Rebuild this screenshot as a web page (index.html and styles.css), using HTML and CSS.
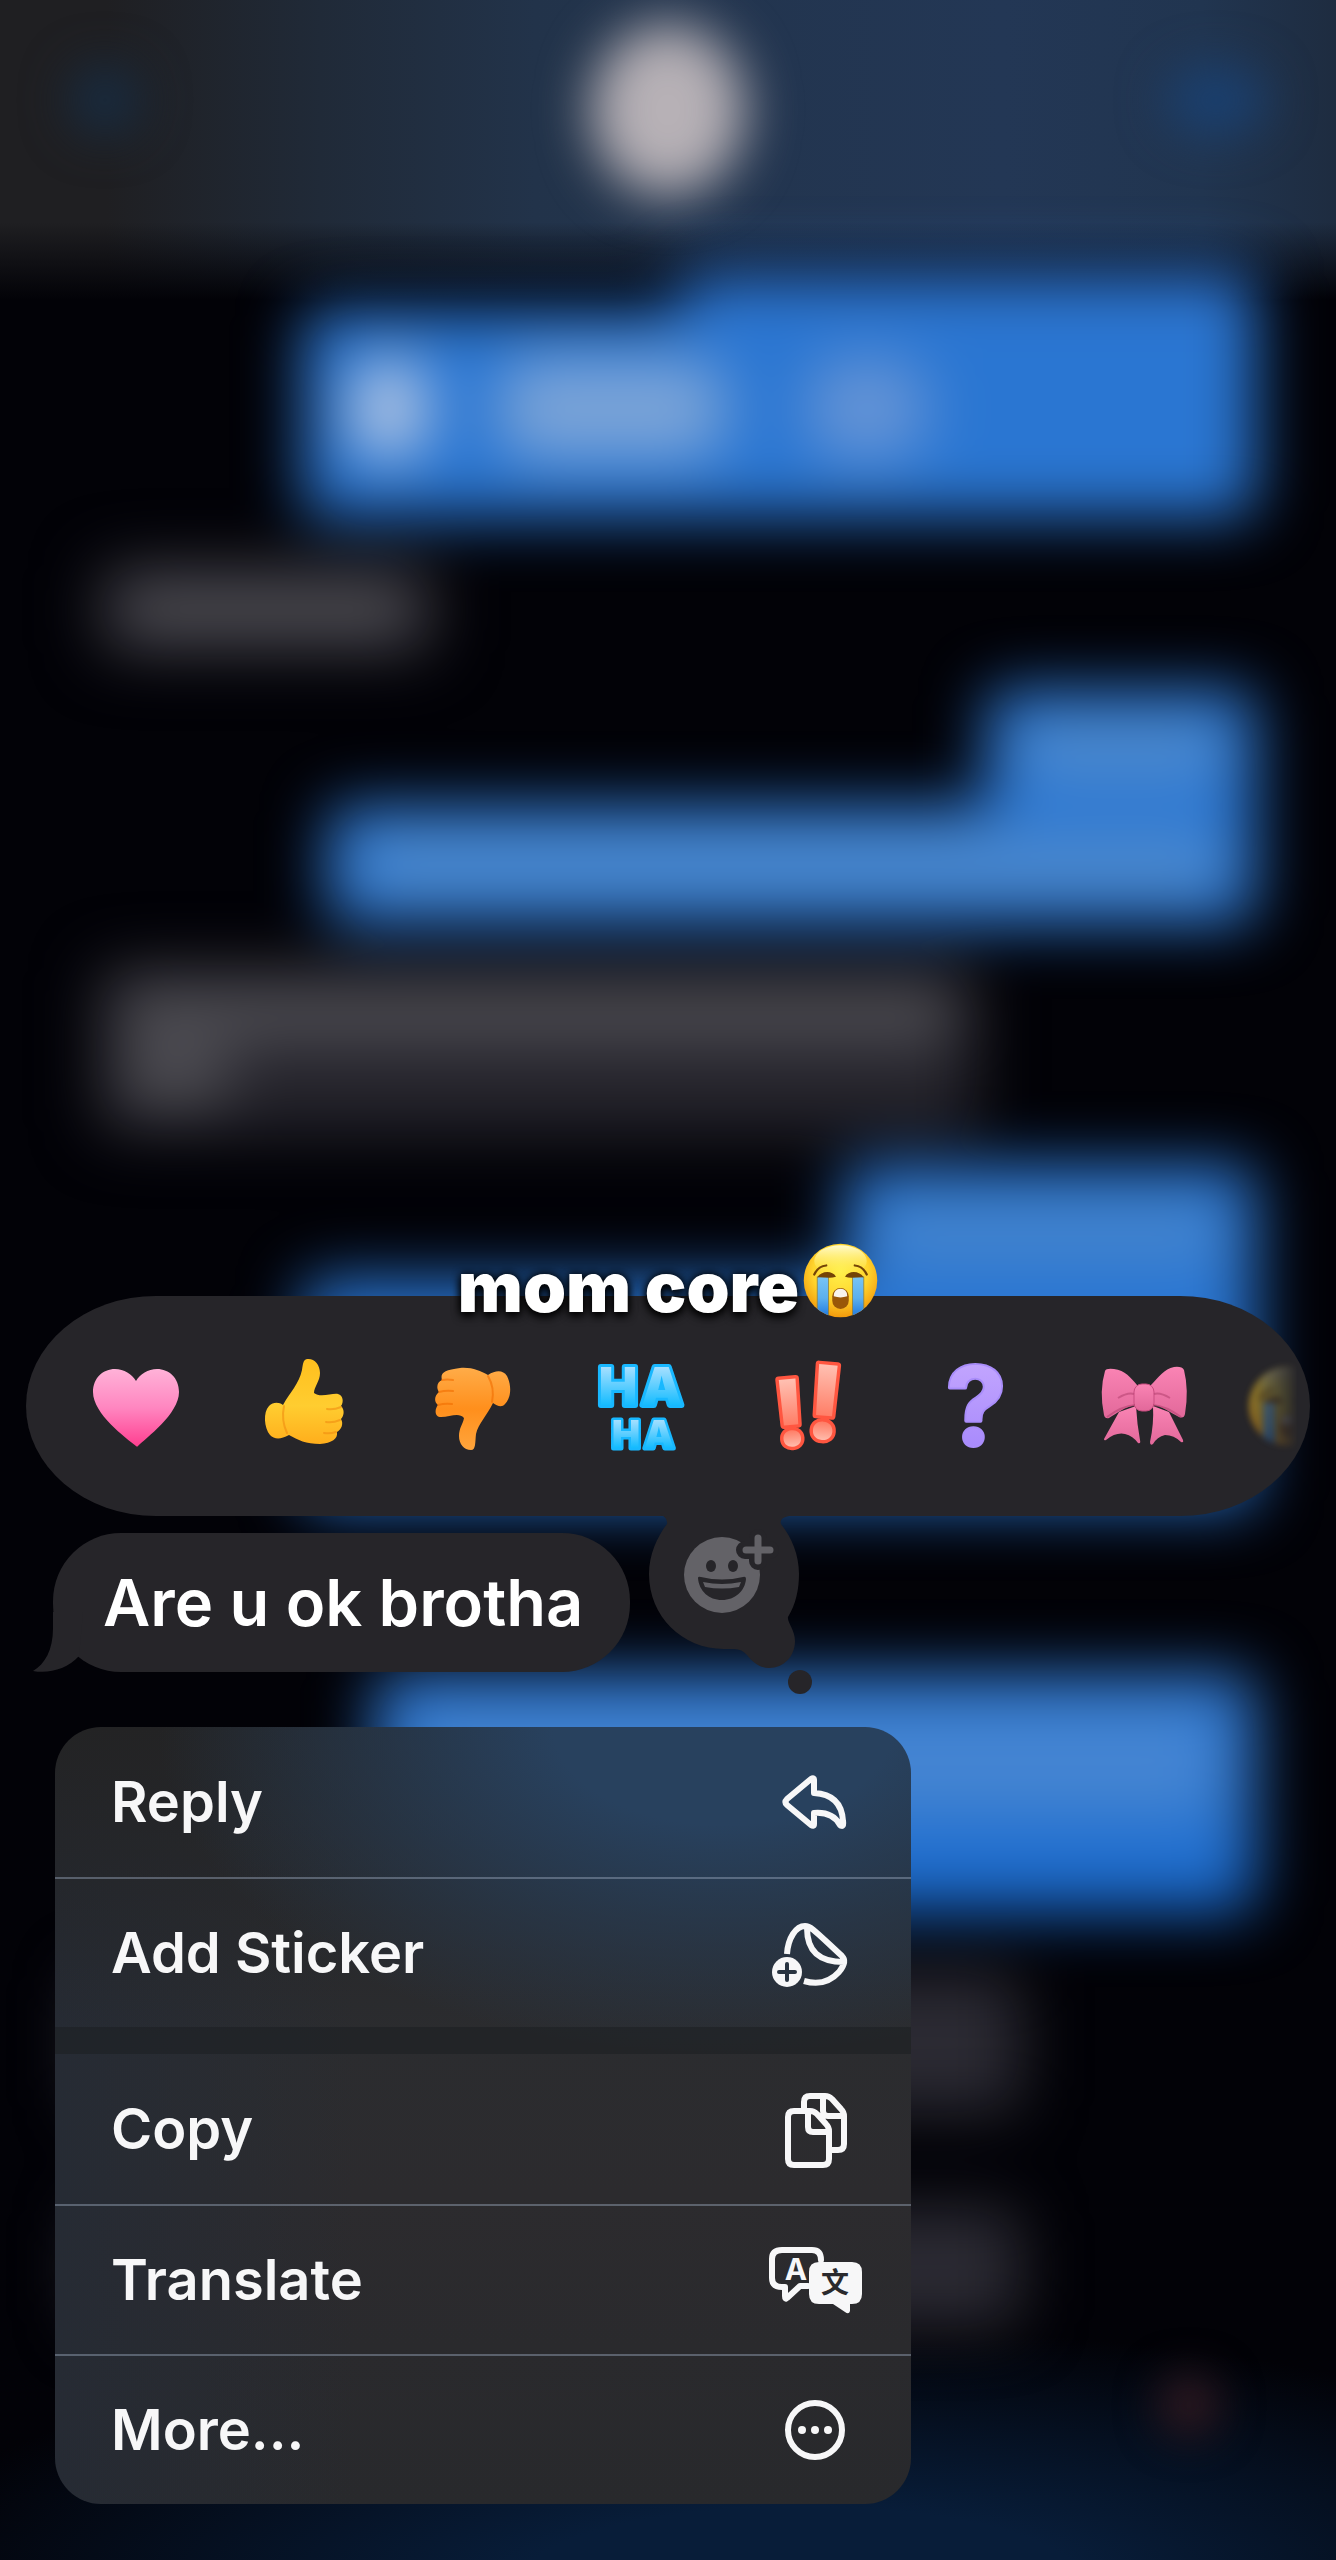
FILE: index.html
```html
<!DOCTYPE html>
<html lang="en">
<head>
<meta charset="utf-8">
<meta name="viewport" content="width=device-width, initial-scale=1">
<title>Messages</title>
<link rel="stylesheet" href="styles.css">
</head>
<body>
<svg class="defs" aria-hidden="true">
  <defs>
    <radialGradient id="face" cx="50%" cy="38%" r="62%"><stop offset="0" stop-color="#fff04a"/><stop offset=".6" stop-color="#ffd52e"/><stop offset="1" stop-color="#f29a0c"/></radialGradient>
    <linearGradient id="shine" x2="0" y2="1"><stop offset="0" stop-color="#fffbd0"/><stop offset="1" stop-color="#fff04a" stop-opacity="0"/></linearGradient>
    <linearGradient id="tear" x2="0" y2="1"><stop offset="0" stop-color="#78c4f4"/><stop offset=".5" stop-color="#5cb0ee"/><stop offset="1" stop-color="#1670dc"/></linearGradient>
    <clipPath id="faceclip"><circle cx="50" cy="50" r="49"/></clipPath>
    <symbol id="sob" viewBox="0 0 100 100">
      <circle cx="50" cy="50" r="49" fill="url(#face)"/>
      <ellipse cx="50" cy="24" rx="35" ry="21" fill="url(#shine)"/>
      <g clip-path="url(#faceclip)" fill="url(#tear)" stroke="#8a7d3c" stroke-width="1"><path d="M19 45H34V102H19ZM66 45H81V102H66Z"/></g>
      <path d="M19 46C24 37 39 36 44 45C36 48 28 45 19 46ZM56 45C61 36 76 37 81 46C72 45 64 48 56 45Z" fill="#744407"/>
      <path d="M15 42Q20 31 31 30M85 42Q80 31 69 30" fill="none" stroke="#744407" stroke-width="3" stroke-linecap="round"/>
      <rect x="39" y="60" width="22" height="28" rx="11" fill="#995708"/>
      <path d="M41 71Q41 61 50 61Q59 61 59 71Q50 74 41 71Z" fill="#f8f4ec"/>
    </symbol>
    <linearGradient id="pink" x2="0" y2="1"><stop offset="0" stop-color="#ffb2d8"/><stop offset=".5" stop-color="#ff86c0"/><stop offset="1" stop-color="#ff3f90"/></linearGradient>
    <linearGradient id="gold" x2="0" y2="1"><stop offset="0" stop-color="#ffbf1e"/><stop offset=".55" stop-color="#ffcd30"/><stop offset="1" stop-color="#ffae1c"/></linearGradient>
    <linearGradient id="amber" x2="0" y2="1"><stop offset="0" stop-color="#ffac48"/><stop offset=".5" stop-color="#ff8f1c"/><stop offset="1" stop-color="#ffa53c"/></linearGradient>
    <linearGradient id="sky" x2="0" y2="1"><stop offset=".2" stop-color="#a4dfff"/><stop offset=".8" stop-color="#14bcff"/></linearGradient>
    <linearGradient id="coral" x2="0" y2="1"><stop offset=".1" stop-color="#ffd0c4"/><stop offset=".65" stop-color="#ff7860"/><stop offset=".8" stop-color="#ffb8a8"/></linearGradient>
    <linearGradient id="violet" x2="0" y2="1"><stop offset="0" stop-color="#c9acff"/><stop offset="1" stop-color="#a183fb"/></linearGradient>
    <linearGradient id="ribbon" x2="0" y2="1"><stop offset="0" stop-color="#fa84b4"/><stop offset="1" stop-color="#e2689a"/></linearGradient>
  </defs>
</svg>

<main class="screen">
  <div class="backdrop" aria-hidden="true">
    <div class="topbar">
      <span class="glow"></span>
      <span class="avatar"></span>
      <span class="glow glow-call"></span>
    </div>
    <div class="thread">
      <div class="msg sent stub"></div>
      <div class="msg sent block"><i class="smudge s1"></i><i class="smudge s2"></i><i class="smudge s3"></i></div>
      <div class="msg got short"><i class="line"></i></div>
      <div class="msg sent tiny"><i class="line"></i></div>
      <div class="msg sent wide"><i class="line"></i></div>
      <div class="msg got para"><i class="line"></i><i class="line half"></i></div>
      <div class="msg sent mid"><i class="line"></i></div>
      <div class="msg sent tall"></div>
      <div class="msg sent deep"><i class="line"></i></div>
      <div class="msg got tail-a"></div>
      <div class="msg got tail-b"></div>
    </div>
    <div class="composer"><span class="record"></span></div>
  </div>

  <div class="overlay">
    <section class="tapbacks" aria-label="Reactions">
      <p class="caption">mom core<svg class="caption-face" role="img" aria-label="Loudly crying face"><use href="#sob"/></svg></p>
      <div class="reactions">
        <button class="reaction" aria-label="Heart"><svg viewBox="0 0 100 100"><path fill="url(#pink)" d="M50 90C40 82 7 58 7 36C7 22 17 13 29 13C38 13 46 18 50 25C54 18 62 13 71 13C83 13 93 22 93 36C93 58 60 82 52 90Q51 91 50 90Z"/></svg></button>
        <button class="reaction" aria-label="Thumbs up"><svg viewBox="0 0 100 100"><path fill="url(#gold)" d="M53 3C60 2 66 8 66 17C66 25 60 31 60 37C66 42 78 37 84 38C89 39 90 46 87 50C91 54 90 60 87 63C90 68 87 74 83 76C84 83 78 87 66 88C52 88 44 84 35 79C26 84 20 83 16 79C10 72 9 56 15 50C19 46 25 46 29 49C36 36 45 28 48 14C49 8 49 4 53 3Z"/><path d="M87 51Q80 54 73 53M86 64Q79 67 72 66M82 76Q76 78 70 77M30 50Q27 64 33 77" fill="none" stroke="#f08c10" stroke-opacity=".6" stroke-width="2" stroke-linecap="round"/></svg></button>
        <button class="reaction" aria-label="Thumbs down"><svg viewBox="0 0 100 100"><path fill="url(#amber)" d="M49 94C42 94 37 88 37 80C37 72 41 68 42 62C37 56 28 61 19 61C13 61 12 54 16 49C12 46 12 40 17 36C14 32 15 26 20 24C18 17 22 14 38 12C50 11 58 15 66 19C74 14 81 14 85 20C90 30 89 42 83 48C80 52 75 50 71 47C66 58 56 68 54 78C53 86 54 94 49 94Z"/><path d="M16 49Q23 47 30 48M17 36Q24 34 31 35M20 24Q25 23 31 24M66 20Q73 32 70 46" fill="none" stroke="#f06c00" stroke-opacity=".6" stroke-width="2" stroke-linecap="round"/></svg></button>
        <button class="reaction" aria-label="Haha"><svg viewBox="0 0 100 100"><g class="puffy haha"><text x="28" y="49" font-size="52">H</text><text x="72" y="49" font-size="52">A</text><text class="small" x="36" y="92" font-size="38">H</text><text class="small" x="69" y="92" font-size="38">A</text></g></svg></button>
        <button class="reaction" aria-label="Emphasize"><svg viewBox="0 0 100 100"><g class="puffy bang"><text x="32" y="90" font-size="92" transform="rotate(-5 32 55)">!</text><text x="67" y="83" font-size="102" transform="rotate(5 67 48)">!</text></g></svg></button>
        <button class="reaction" aria-label="Question"><svg viewBox="0 0 100 100"><g class="puffy query"><text x="50" y="89" font-size="108">?</text></g></svg></button>
        <button class="reaction" aria-label="Ribbon"><svg viewBox="0 0 100 100"><g fill="url(#ribbon)"><path d="M25 56L10 83Q10 85 12 84Q22 76 31 78Q39 80 44 87Q47 88 46 84Q43 68 42 50ZM75 56L89 84Q90 87 87 86Q80 79 71 79Q63 81 59 88Q56 90 56 86Q60 68 59 50Z"/><path d="M11 15Q12 12 20 13C31 14 37 22 43 29V49C31 50 22 58 15 62Q11 63 10 59Q5 35 11 15ZM90 14Q88 10 80 11C70 13 65 21 57 29V49C67 49 77 57 85 61Q90 63 91 58Q95 34 90 14Z"/><rect x="40" y="28" width="20" height="27" rx="8" stroke="#c94d80"/></g><path d="M13 61Q28 50 41 49M87 61Q72 50 59 49M24 42Q34 36 40 38M76 42Q66 36 60 38" fill="none" stroke="#b84573" stroke-opacity=".6" stroke-width="2"/></svg></button>
        <button class="reaction reaction-next" aria-label="Loudly crying face"><svg><use href="#sob"/></svg></button>
      </div>
      <button class="add-reaction" aria-label="Add emoji reaction">
        <svg viewBox="0 0 200 220">
          <path fill="#262529" d="M30 0V24Q38 28 37 34C27 47 19 65 19 84C19 126 52 159 94 159H104Q112 159 117 165C123 173 131 178 139 178C154 178 165 166 165 151C165 140 157 132 158 127C166 114 169 99 169 84C169 65 162 48 151 34Q149 28 159 26V0Z"/>
          <circle cx="170" cy="192" r="12" fill="#262529"/>
          <circle cx="92" cy="85" r="38" fill="#636267"/>
          <g fill="#262529"><ellipse cx="81" cy="76" rx="5" ry="6"/><ellipse cx="103" cy="76" rx="5" ry="6"/><path d="M68 88Q68 86 71 87Q92 92 113 87Q116 86 116 89C115 101 105 110 92 110C79 110 69 101 68 88Z"/></g>
          <path d="M73 92Q92 96 111 92L109 97Q92 100 75 97Z" fill="#636267"/>
          <path d="M128 48V71M115 60H140" stroke="#262529" stroke-width="18" stroke-linecap="round"/>
          <path d="M128 48V71M116 60H140" stroke="#636267" stroke-width="7" stroke-linecap="round"/>
        </svg>
      </button>
    </section>

    <p class="bubble"><svg class="bubble-tail" viewBox="0 0 50 60" aria-hidden="true"><path fill="#262529" d="M20 0V16C20 38 12 52 0 59C16 62 34 57 46 44L50 0Z"/></svg>Are u ok brotha</p>

    <nav class="menu" aria-label="Message actions">
      <button class="item">Reply<svg class="icon" viewBox="0 -4 100 80"><path d="M47 13L23 33Q20 36 23 39L47 59Q50 61 50 58V47C62 46 71 50 76 59Q80 62 79 55C78 38 69 28 50 27V14Q50 11 47 13Z"/></svg></button>
      <button class="item">Add Sticker<svg class="icon" viewBox="0 -4 100 80"><path class="butt" d="M23 37C24 21 32 9 41 9C47 9 51 14 78 39C83 44 79 50 75 55C66 65 54 68 40 64M43 11C43 34 55 45 80 45"/><circle class="solid" cx="23" cy="55" r="15"/><path class="cut" d="M23 47V63M15 55H31"/></svg></button>
      <hr class="split">
      <button class="item">Copy<svg class="icon" viewBox="0 -4 100 80"><path d="M30 18H46Q50 18 53 21L62 31Q65 34 65 38V66Q65 72 59 72H30Q24 72 24 66V24Q24 18 30 18ZM44 20V34Q44 39 49 39H63M40 16V9Q40 3 46 3H61Q65 3 68 6L77 16Q80 19 80 23V51Q80 57 74 57H67M59 5V18Q59 23 64 23H78"/></svg></button>
      <button class="item">Translate<svg class="icon" viewBox="0 -4 100 80"><path d="M44 42H36L23 54Q21 56 21 52V43H18Q8 43 8 34V15Q8 6 18 6H48Q57 6 57 16"/><text class="glyph" x="32" y="36">A</text><path class="solid" d="M55 18H88Q98 18 98 28V50Q98 60 88 60H86V67Q85 71 81 68L69 60H55Q45 60 45 50V28Q45 18 55 18Z"/><text class="glyph dark" x="71" y="49">文</text></svg></button>
      <button class="item">More...<svg class="icon" viewBox="0 -4 100 80"><circle cx="51" cy="36" r="27"/><g class="solid"><circle cx="38" cy="36" r="4"/><circle cx="51" cy="36" r="4"/><circle cx="64" cy="36" r="4"/></g></svg></button>
    </nav>
  </div>
</main>
</body>
</html>
```
FILE: styles.css
```css
* { box-sizing: border-box; }

body {
  margin: 0;
  background: #020207;
  color: #fff;
  font-family: Inter, "Noto Sans", sans-serif;
}

button {
  margin: 0;
  padding: 0;
  border: 0;
  background: none;
  color: inherit;
  font: inherit;
  cursor: pointer;
}

.defs { position: absolute; width: 0; height: 0; }

.screen {
  display: grid;
  min-height: 100vh;
  overflow: hidden;
}

.backdrop, .overlay { grid-area: 1 / 1; min-width: 0; }

/* Blurred conversation */
.backdrop { display: flex; flex-direction: column; }

.topbar {
  display: grid;
  grid-template-columns: 1fr auto 1fr;
  align-items: center;
  height: 300px;
  padding: 0 70px 80px;
  background:
    linear-gradient(to bottom, transparent 74%, #020207 100%),
    linear-gradient(to right, #1f1f22 8%, #202a38 24%, #22334a 40%, #233755 75%, #213550 90%, #1e2c40);
}

.glow { width: 70px; height: 70px; margin-top: -20px; border-radius: 50%; background: #182c42; filter: blur(24px); }
.glow-call { justify-self: end; width: 100px; background: #1a4070; }
.avatar { width: 154px; height: 172px; border-radius: 50%; background: #b7b1b6; filter: blur(26px); }

.thread {
  display: flex;
  flex-direction: column;
  padding: 0 80px;
  margin-top: -30px;
  filter: blur(31px);
}

.msg { flex: none; display: flex; border-radius: 20px; }
.sent { align-self: flex-end; background: #2a76d2; }
.got { align-self: flex-start; background: #25242c; }

.line { flex: 1; height: 54px; border-radius: 24px; background: #528ccc; }
.got .line { background: #504f55; }

.stub { width: 49%; height: 80px; margin-bottom: -40px; background: #2c70c8; }
.block { width: 81%; height: 208px; align-items: center; padding: 0 0 10px 48px; }
.smudge { height: 100px; border-radius: 40px; }
.s1 { width: 76px; background: #b8c9e4; }
.s2 { width: 230px; margin-left: 70px; background: #7ba4d8; }
.s3 { width: 120px; margin-left: 80px; background: #6594d6; }
.short { width: 29%; height: 95px; margin-top: 44px; margin-left: 16px; padding: 20px; }
.tiny { width: 23%; height: 140px; margin-top: 32px; margin-bottom: -24px; padding: 34px 30px; }
.wide { width: 79%; height: 120px; padding: 32px 30px; }
.para { width: 75%; height: 170px; margin-top: 40px; margin-left: 16px; padding: 20px; flex-direction: column; gap: 8px; }
.para .line { flex: none; height: 56px; }
.para .half { width: 116px; }
.mid { width: 35%; height: 140px; margin-top: 30px; margin-bottom: -26px; padding: 40px 30px; }
.mid .line { background: #4886cc; }
.tall { width: 81%; height: 228px; }
.deep { width: 75%; height: 240px; margin-top: 166px; padding: 40px; background: linear-gradient(#2d76cf 50%, #1668ce); }
.deep .line { height: 100px; background: #4585d2; }
.tail-a { width: 80%; height: 140px; margin-top: 60px; background: #2b2a33; }
.tail-b { width: 80%; height: 120px; margin-top: 94px; background: #2b2a33; }

.composer {
  flex: 1;
  display: flex;
  justify-content: flex-end;
  padding: 46px 115px;
  background: radial-gradient(ellipse 70% 110% at 60% 110%, #081d39 30%, rgba(8, 29, 57, 0));
}
.record { width: 64px; height: 64px; border-radius: 50%; background: #2b1820; filter: blur(20px); }

/* Focused message, reactions and actions */
.overlay {
  position: relative;
  display: flex;
  flex-direction: column;
  align-items: flex-start;
  justify-content: flex-end;
  padding: 0 26px 56px;
}

.tapbacks {
  position: relative;
  align-self: stretch;
  height: 220px;
  border-radius: 130px / 110px;
  background: #262529;
}

.caption {
  position: absolute;
  top: -53px;
  left: 0;
  right: 0;
  display: flex;
  justify-content: center;
  align-items: center;
  gap: 4px;
  margin: 0;
  font-size: 69px;
  font-weight: 900;
  line-height: 80px;
  text-shadow: 0 4px 10px #000, 0 0 10px #000;
}
.caption-face { width: 75px; height: 75px; margin-bottom: 12px; }

.reactions {
  display: flex;
  align-items: center;
  height: 220px;
  margin-right: 12px;
  padding-left: 26px;
  overflow: hidden;
  mask-image: linear-gradient(to left, transparent, #000 70px);
}
.reaction { flex: none; width: 168px; height: 120px; }
.reaction svg { display: block; width: 100px; height: 100px; margin: 0 auto; overflow: visible; }
.reaction-next svg { width: 82px; height: 82px; margin: 0 20px; opacity: 0.7; filter: blur(3px); }

.puffy text {
  font-family: Inter, sans-serif;
  font-weight: 800;
  text-anchor: middle;
  paint-order: stroke;
  stroke-linejoin: round;
  stroke-width: 7px;
}
.haha text { font-weight: 900; fill: url(#sky); stroke: #18b8ff; stroke-width: 6px; }
.haha .small { stroke-width: 5px; }
.bang text { fill: url(#coral); stroke: #ff5640; }
.query text { font-weight: 700; fill: url(#violet); stroke: #a98dfa; stroke-width: 4px; }

.add-reaction { position: absolute; top: 194px; left: 604px; width: 200px; height: 220px; }
.add-reaction svg { display: block; }

.bubble {
  position: relative;
  margin: 17px 0 0 27px;
  padding: 30px 47px 29px 50px;
  border-radius: 68px;
  background: #262529;
  font-size: 65px;
  font-weight: 600;
  line-height: 80px;
}
.bubble-tail { position: absolute; left: -20px; bottom: 0; width: 50px; height: 60px; }

.menu {
  width: 856px;
  max-width: 100%;
  margin: 55px 0 0 29px;
  overflow: hidden;
  border-radius: 46px;
  background:
    radial-gradient(ellipse 66% 42% at 78% 0%, #28415e 30%, rgba(39, 65, 95, 0)),
    linear-gradient(#232324, rgba(36, 36, 38, 0) 40%),
    linear-gradient(to right, #262b34, rgba(38, 43, 52, 0) 35%),
    linear-gradient(#2b2c2f 40%, #2c2b2e 60%, #28292c);
}

.item {
  display: flex;
  justify-content: space-between;
  align-items: center;
  width: 100%;
  height: 150px;
  padding: 0 47px 0 56px;
  color: #f7f7f8;
  font-size: 56px;
  font-weight: 600;
  text-align: left;
}
.item + .item { border-top: 2px solid rgba(160, 175, 195, 0.42); }

.split { height: 27px; margin: 0; border: 0; background: rgba(28, 31, 35, 0.6); }

.icon {
  flex: none;
  width: 100px;
  height: 80px;
  fill: none;
  stroke: #f7f7f8;
  stroke-width: 6px;
  stroke-linecap: round;
  stroke-linejoin: round;
}
.icon .butt { stroke-linecap: butt; }
.icon .solid { fill: #f7f7f8; stroke: none; }
.icon .cut { stroke: #293441; stroke-width: 4px; }
.glyph {
  fill: #f7f7f8;
  stroke: none;
  font-family: Inter, "Noto Sans CJK SC", sans-serif;
  font-size: 30px;
  font-weight: 700;
  text-anchor: middle;
}
.glyph.dark { fill: #2a2a2d; font-size: 28px; }
```
